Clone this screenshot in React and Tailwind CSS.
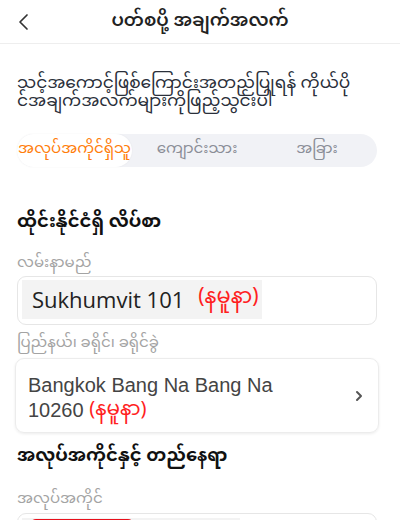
import React, { useState } from "react";

const MM = { fontFamily: '"Noto Sans Myanmar", "Padauk", "Myanmar Text", "Noto Sans", sans-serif' };

const tabs = ["အလုပ်အကိုင်ရှိသူ", "ကျောင်းသား", "အခြား"];

const App = () => {
  const [active, setActive] = useState(0);

  return (
    <div className="w-[400px] h-[520px] overflow-hidden bg-white text-[#1f2430]" style={MM}>
      {/* header */}
      <div className="relative h-[44px] flex items-center justify-center border-b border-[#eeeeee]">
        <button className="absolute left-[16px] top-[11px] text-[#333]">
          <svg width="16" height="22" viewBox="0 0 16 22" fill="none">
            <path d="M11 4 L4 11 L11 18" stroke="#333" strokeWidth="1.7" strokeLinecap="round" strokeLinejoin="round" />
          </svg>
        </button>
        <p className="text-[18px] font-semibold text-[#222]">ပတ်စပို့ အချက်အလက်</p>
      </div>

      <div className="px-[17px]">
        <div className="mt-[31px] text-[17px] leading-[18px] text-[#2a2f3a]">
          <p>သင့်အကောင့်ဖြစ်ကြောင်းအတည်ပြုရန် ကိုယ်ပို</p>
          <p>င်အချက်အလက်များကိုဖြည့်သွင်းပါ</p>
        </div>

        {/* segmented tabs */}
        <div className="mt-[23px] h-[33px] w-[360px] rounded-full bg-[#f1f2f6] grid grid-cols-3">
          {tabs.map((t, i) => (
            <button
              key={t}
              onClick={() => setActive(i)}
              className={
                i === active
                  ? "rounded-full bg-white text-[#ff7d0a] text-[15px] shadow-[0_0_2px_rgba(0,0,0,0.06)] w-[115px]"
                  : "text-[#8a8d96] text-[15px]"
              }
            >
              {t}
            </button>
          ))}
        </div>

        <p className="mt-[42px] text-[18px] font-bold text-[#111]">ထိုင်းနိုင်ငံရှိ လိပ်စာ</p>

        <p className="mt-[17px] text-[15px] text-[#a3a3a3]">လမ်းနာမည်</p>
        <div className="h-[49px] w-[360px] rounded-[9px] border border-[#e6e6e6] pt-[3px] pb-[5px] px-[4px]">
          <div className="h-full w-[240px] bg-[#f3f3f3] flex items-center pl-[10px]">
            <span className="text-[22px] text-[#222]" style={{ fontFamily: '"Open Sans", "Noto Sans", sans-serif' }}>
              Sukhumvit 101
            </span>
            <span className="ml-[14px] text-[21px] text-[#ff1f1f]">(နမူနာ)</span>
          </div>
        </div>

        <p className="mt-[8px] text-[15px] text-[#a3a3a3]">ပြည်နယ်၊ ခရိုင်၊ ခရိုင်ခွဲ</p>
        <div className="mt-[3px] -mx-[2px] h-[75px] w-[364px] rounded-[9px] border border-[#ececec] shadow-[0_1px_3px_rgba(0,0,0,0.08)] flex items-center justify-between pl-[12px] pr-[14px]">
          <div className="text-[20px] leading-[25px] text-[#444] pt-[4px]" style={{ fontFamily: '"Liberation Sans", Arial, sans-serif' }}>
            <p className="font-medium">Bangkok Bang Na Bang Na</p>
            <p className="font-medium">
              10260{" "}
              <span className="inline-block align-middle leading-[22px] text-[#ff1f1f] font-normal text-[20px]" style={MM}>
                (နမူနာ)
              </span>
            </p>
          </div>
          <svg width="10" height="14" viewBox="0 0 10 14" fill="none">
            <path d="M3 3 L7 7 L3 11" stroke="#555" strokeWidth="2" strokeLinecap="round" strokeLinejoin="round" />
          </svg>
        </div>

        <p className="mt-[10px] text-[18px] font-bold text-[#111]">အလုပ်အကိုင်နှင့် တည်နေရာ</p>

        <p className="mt-[19px] text-[15px] text-[#a3a3a3]">အလုပ်အကိုင်</p>
        <div className="mt-[1px] h-[49px] w-[360px] rounded-[9px] border border-[#e6e6e6] p-[4px]">
          <div className="h-full w-[218px] bg-[#f3f3f3] pl-[8px] pt-[1px]">
            <div className="h-[30px] w-[104px] rounded-[6px] bg-[#e8101c]" />
          </div>
        </div>
      </div>
    </div>
  );
};

export default App;
